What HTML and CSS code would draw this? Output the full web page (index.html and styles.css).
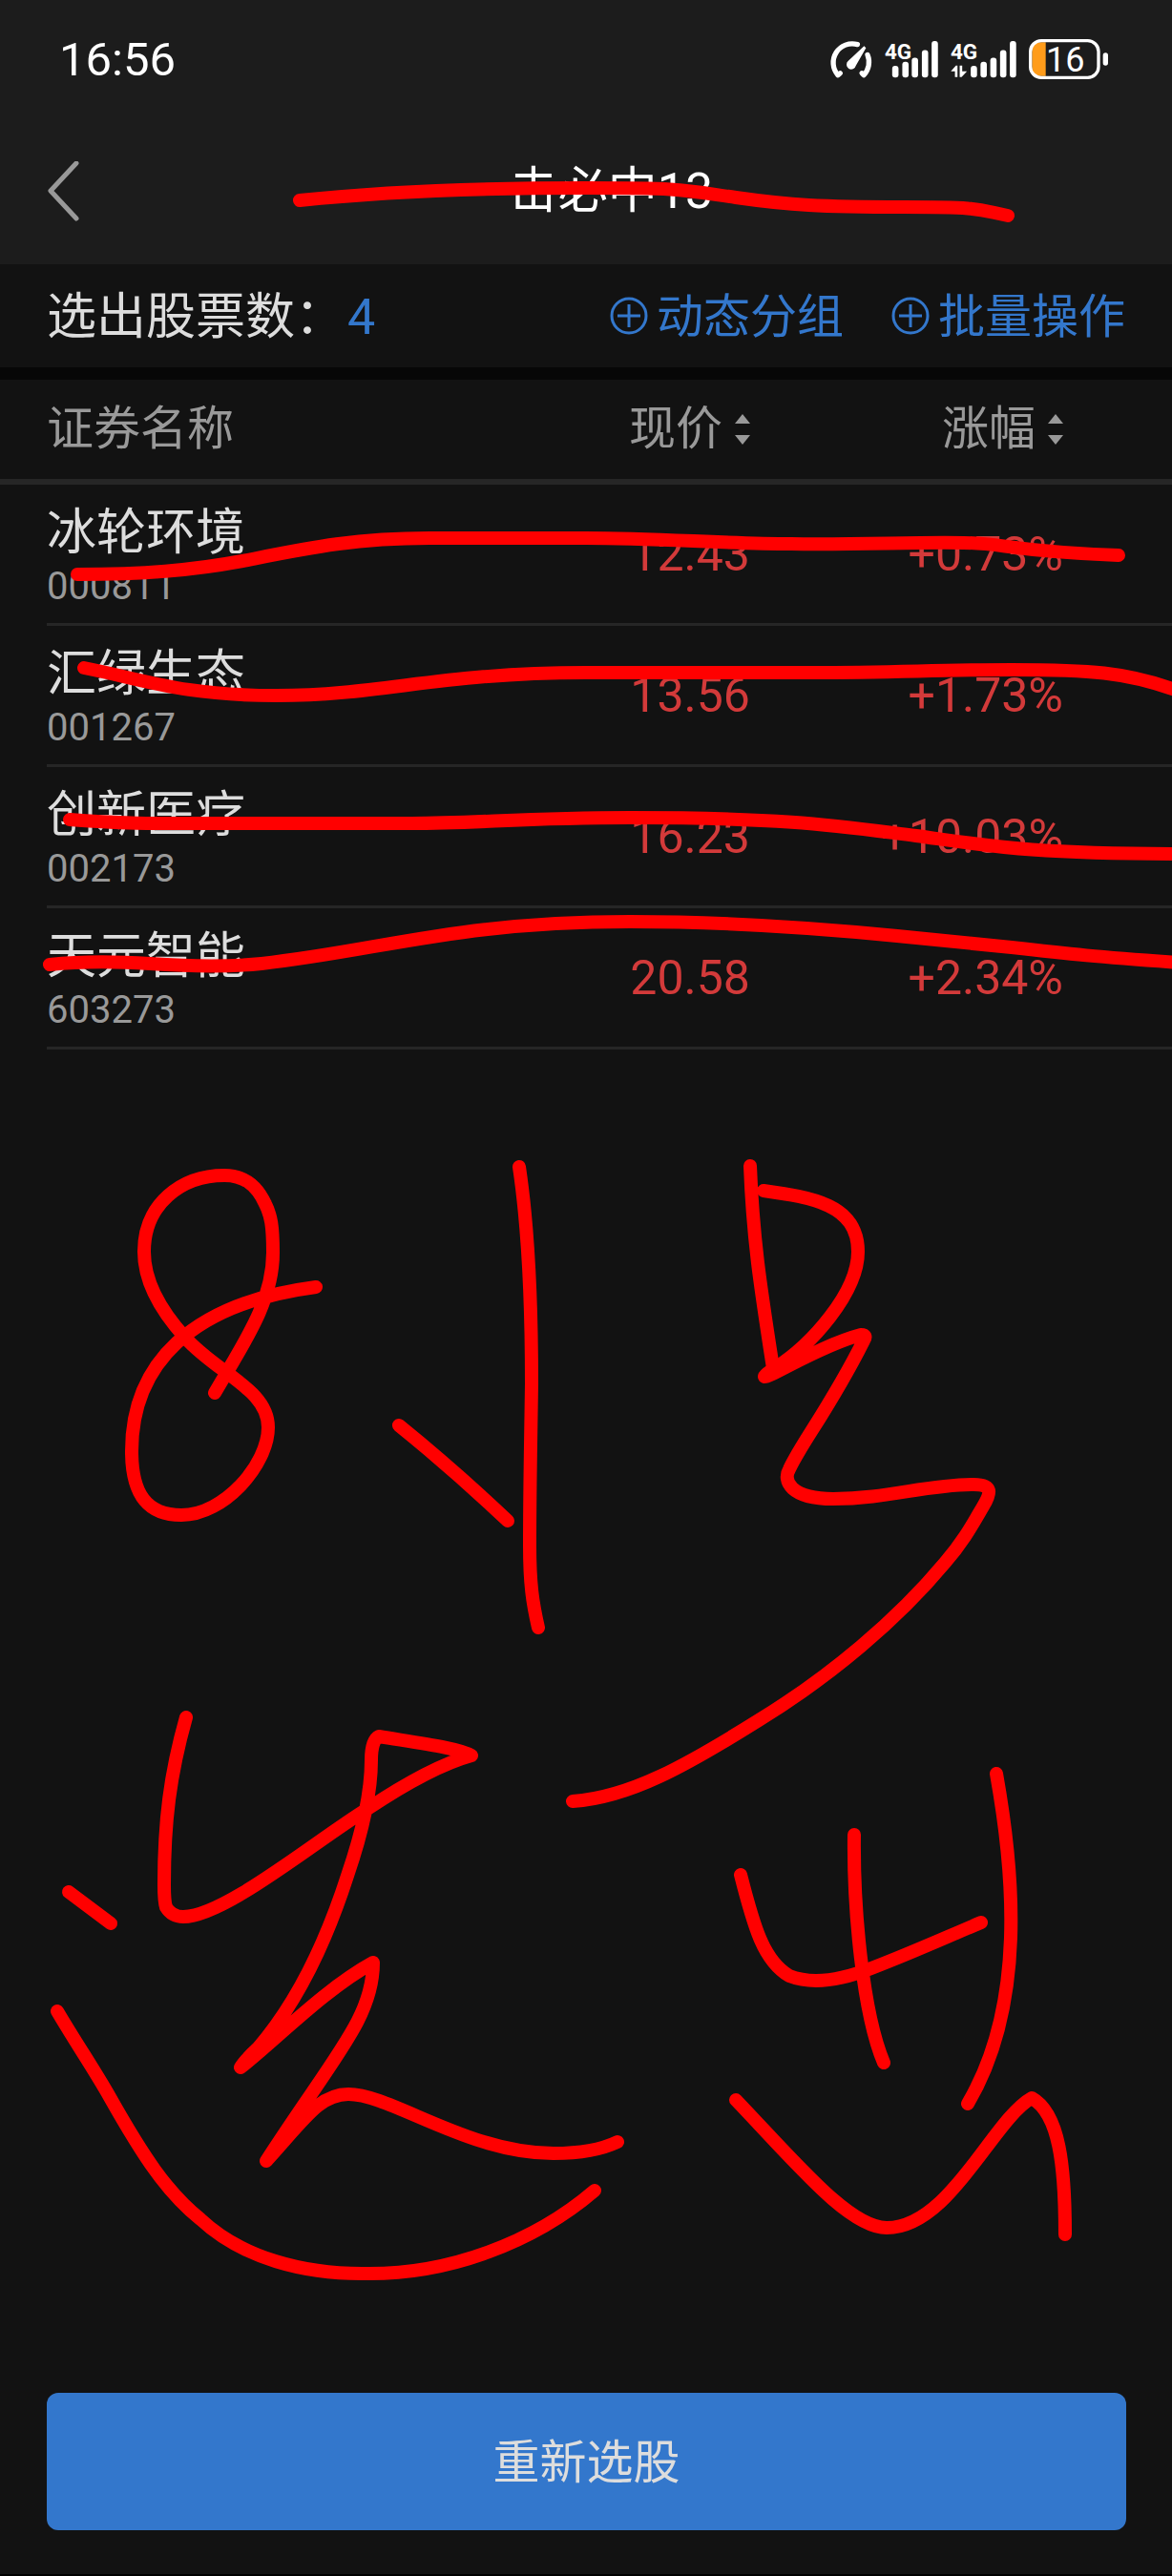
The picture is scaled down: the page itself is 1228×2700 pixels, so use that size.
FILE: index.html
```html
<!DOCTYPE html>
<html lang="zh-CN">
<head>
  <meta charset="UTF-8">
  <meta name="viewport" content="width=device-width, initial-scale=1.0">
  <title>一击必中13</title>
  <link rel="stylesheet" href="styles.css">
</head>
<body>
  <div class="page">
    <header class="top">
      <div class="status-bar">
        <span class="clock">16:56</span>
        <div class="status-icons">
          <svg width="45" height="39" viewBox="0 0 136 118" fill="none" stroke="#fff" stroke-width="16" stroke-linecap="round" stroke-linejoin="round">
            <path d="M34 102 L27 108 A60 60 0 0 1 89 11"/>
            <path d="M121 44 A60 60 0 0 1 109 108 L103 102"/>
            <path d="M110 16 L116 22 L84 78 A15 15 0 1 1 60 63 Z" fill="#fff" stroke="none"/>
          </svg>
          <svg width="56" height="39" viewBox="0 0 168 118" fill="#fff">
            <text class="net" x="-1" y="56">4G</text>
            <rect x="23" y="79" width="20" height="37" rx="9"/>
            <rect x="55" y="66" width="20" height="50" rx="9"/>
            <rect x="85" y="53" width="20" height="63" rx="9"/>
            <rect x="117" y="29" width="20" height="87" rx="9"/>
            <rect x="148" y="0" width="20" height="116" rx="9"/>
          </svg>
          <svg width="69" height="39" viewBox="0 0 207 118" fill="#fff">
            <text class="net" x="-1" y="56">4G</text>
            <path d="M0 96 L16 78 L21 78 L21 114 L13 114 L13 96 Z M28 78 L36 78 L36 96 L51 96 L34 114 L28 114 Z"/>
            <rect x="63" y="79" width="20" height="37" rx="9"/>
            <rect x="94" y="66" width="20" height="50" rx="9"/>
            <rect x="125" y="53" width="20" height="63" rx="9"/>
            <rect x="156" y="29" width="20" height="87" rx="9"/>
            <rect x="187" y="0" width="20" height="116" rx="9"/>
          </svg>
          <svg width="84" height="42" viewBox="0 0 252 126">
            <path d="M53 10 H37 Q10 10 10 37 V89 Q10 116 37 116 H53 Z" fill="#ff9c1a"/>
            <rect x="5" y="5" width="214" height="116" rx="34" fill="none" stroke="#fff" stroke-width="10"/>
            <rect x="233" y="43" width="16" height="40" rx="8" fill="#fff"/>
            <text class="level" x="115" y="102" text-anchor="middle" fill="#fff">16</text>
          </svg>
        </div>
      </div>
      <nav class="nav">
        <button class="back" type="button" aria-label="返回">
          <svg width="34" height="64" viewBox="0 0 34 64" fill="none" stroke="#999" stroke-width="5" stroke-linecap="round" stroke-linejoin="round">
            <path d="M31 2 L4 31 L31 60"/>
          </svg>
        </button>
        <h1 class="title">一击必中13</h1>
      </nav>
    </header>

    <section class="summary">
      <p class="count">选出股票数：<span class="num">4</span></p>
      <div class="actions">
        <button type="button">
          <svg width="40" height="40" viewBox="0 0 40 40" fill="none" stroke="currentColor" stroke-width="3">
            <circle cx="20" cy="20" r="18"/>
            <path d="M8 20 H32 M20 8 V32"/>
          </svg>
          <span class="label">动态分组</span>
        </button>
        <button type="button">
          <svg width="40" height="40" viewBox="0 0 40 40" fill="none" stroke="currentColor" stroke-width="3">
            <circle cx="20" cy="20" r="18"/>
            <path d="M8 20 H32 M20 8 V32"/>
          </svg>
          <span class="label">批量操作</span>
        </button>
      </div>
    </section>

    <table class="stocks">
      <thead>
        <tr>
          <th class="col-name">证券名称</th>
          <th class="col-price">
            <button type="button">现价
              <svg width="16" height="32" viewBox="0 0 16 32" fill="currentColor"><path d="M8 0 L16 10 H0 Z M0 22 H16 L8 32 Z"/></svg>
            </button>
          </th>
          <th class="col-rate">
            <button type="button">涨幅
              <svg width="16" height="32" viewBox="0 0 16 32" fill="currentColor"><path d="M8 0 L16 10 H0 Z M0 22 H16 L8 32 Z"/></svg>
            </button>
          </th>
        </tr>
      </thead>
      <tbody>
        <tr>
          <td class="col-name"><div class="name">冰轮环境</div><div class="code">000811</div></td>
          <td class="col-price">12.43</td>
          <td class="col-rate">+0.73%</td>
        </tr>
        <tr>
          <td class="col-name"><div class="name">汇绿生态</div><div class="code">001267</div></td>
          <td class="col-price">13.56</td>
          <td class="col-rate">+1.73%</td>
        </tr>
        <tr>
          <td class="col-name"><div class="name">创新医疗</div><div class="code">002173</div></td>
          <td class="col-price">16.23</td>
          <td class="col-rate">+10.03%</td>
        </tr>
        <tr>
          <td class="col-name"><div class="name">天元智能</div><div class="code">603273</div></td>
          <td class="col-price">20.58</td>
          <td class="col-rate">+2.34%</td>
        </tr>
      </tbody>
    </table>

    <footer class="bottom">
      <button class="reselect" type="button">重新选股</button>
    </footer>

    <!-- Pen marks over the page -->
    <svg class="marks" viewBox="0 0 1228 2700" aria-hidden="true">
      <!-- strike-through lines -->
      <path d="M314 210 C410 200 510 197 614 197 S715 199 771 207 S860 217 947 217 S1025 220 1056 226"/>
      <path d="M81 602 C150 602 200 598 254 588 C320 575 370 564 450 564 L614 564 C690 564 760 570 829 570 C900 571 960 568 1010 569 C1050 569 1060 578 1172 582"/>
      <path d="M88 700 C150 712 190 729 290 729 C400 729 460 705 614 705 L850 705 C940 705 980 702 1060 702 C1140 702 1180 704 1234 724"/>
      <path d="M73 859 C130 864 180 863 235 863 L431 863 C500 863 550 857 660 857 C830 857 880 866 960 876 C1040 887 1080 895 1236 895"/>
      <path d="M52 1011 C80 1008 110 1007 157 1010 C200 1013 235 1014 274 1010 C400 996 480 966 660 966 C760 966 860 973 940 981 L1060 993 C1120 1000 1150 1003 1236 1009"/>
      <!-- first line of handwriting -->
      <path d="M225 1460 C255 1408 286 1365 286 1313 C286 1285 284 1274 278 1262 C268 1240 254 1232 235 1232 C190 1232 151 1262 151 1312 C151 1340 165 1370 194 1402 C228 1440 281 1456 281 1496 C281 1535 235 1588 190 1588 C153 1588 138 1565 138 1521 C138 1430 200 1366 331 1349"/>
      <path d="M544 1223 C554 1290 557 1370 557 1450 C556 1520 555 1560 555 1620 C555 1660 558 1680 564 1706"/>
      <path d="M418 1494 C460 1528 495 1559 532 1594"/>
      <path d="M786 1222 C789 1300 797 1350 810 1434"/>
      <path d="M800 1248 C850 1255 899 1262 899 1312 C899 1355 850 1410 812 1434 Q801 1441 801 1443 C807 1444 860 1410 902 1399 Q909 1399 905 1405 C870 1475 838 1515 827 1540 C820 1552 828 1571 873 1571 C930 1571 970 1556 1020 1556 C1040 1556 1039 1564 1030 1579 C1020 1596 1010 1615 990 1638 C940 1698 870 1757 795 1803 C720 1850 660 1884 600 1888"/>
      <!-- second line of handwriting -->
      <path d="M195 1800 C178 1860 172 1910 172 1975 Q172 1993 174 1999 Q180 2009 192 2009 C235 2009 330 1930 385 1896 C430 1866 465 1848 494 1840 C480 1832 440 1827 397 1820 Q389 1824 389 1845 C389 1880 378 1925 364 1966 C345 2025 315 2095 270 2147 Q256 2160 252 2167 C290 2137 340 2085 391 2057 C391 2115 350 2155 279 2265 C320 2220 335 2195 365 2195 C410 2195 490 2257 580 2257 Q622 2257 647 2245"/>
      <path d="M72 1983 L116 2016"/>
      <path d="M60 2108 C80 2142 98 2168 115 2198 C150 2260 175 2298 210 2326 C255 2368 320 2383 379 2383 C470 2385 560 2350 623 2296"/>
      <path d="M776 1965 C790 2020 800 2055 827 2071 C850 2080 880 2076 913 2063 C955 2047 990 2031 1028 2015"/>
      <path d="M895 1923 C894 2000 904 2110 926 2162"/>
      <path d="M1044 1859 C1062 1960 1076 2100 1014 2205"/>
      <path d="M771 2201 C835 2268 890 2335 929 2335 C995 2335 1040 2222 1081 2199 C1110 2215 1116 2270 1116 2342"/>
    </svg>
  </div>
</body>
</html>
```
FILE: styles.css
```css
* {
  margin: 0;
  padding: 0;
  box-sizing: border-box;
}

body {
  font-family: Roboto, "Noto Sans CJK SC", sans-serif;
  background-color: #121212;
  color: #ddd;
}

button {
  font: inherit;
  color: inherit;
  background: none;
  border: none;
  cursor: pointer;
}

.page {
  position: relative;
  display: flex;
  flex-direction: column;
  min-height: 100vh;
  overflow: hidden;
  border-bottom: 2px solid #000;
}

/* Status bar and title */
.top {
  background-color: #1c1c1c;
  color: #fff;
}

.status-bar {
  display: flex;
  justify-content: space-between;
  align-items: center;
  height: 124px;
  padding: 0 66px 0 62px;
}

.clock {
  font-size: 49px;
}

.status-icons {
  display: flex;
  align-items: center;
  gap: 13px;
}

.status-icons svg {
  overflow: visible;
}

.net {
  font-size: 68px;
  font-weight: 700;
}

.level {
  font-size: 108px;
}

.nav {
  display: grid;
  grid-template-columns: 1fr auto 1fr;
  align-items: center;
  height: 153px;
  padding: 0 49px;
}

.back {
  justify-self: start;
}

.back svg {
  display: block;
}

.title {
  font-size: 52px;
  font-weight: 400;
  line-height: 76px;
}

/* Result count and actions */
.summary {
  display: flex;
  justify-content: space-between;
  align-items: center;
  height: 121px;
  padding: 0 49px;
  border-bottom: 13px solid #070707;
}

.count {
  padding-bottom: 8px;
  font-size: 52px;
}

.count .num {
  margin-left: 3px;
  color: #37c;
}

.actions {
  display: flex;
  gap: 50px;
}

.actions button {
  display: flex;
  align-items: center;
  gap: 9px;
  font-size: 49px;
  color: #37c;
}

.actions .label {
  padding-bottom: 8px;
}

/* Stock table */
.stocks {
  width: 100%;
  table-layout: fixed;
  border-collapse: separate;
  border-spacing: 0;
}

.stocks th {
  height: 110px;
  border-bottom: 6px solid #262626;
  font-size: 49px;
  font-weight: 400;
  line-height: 72px;
  color: #999;
}

.stocks th button {
  display: inline-flex;
  align-items: center;
  gap: 13px;
}

.stocks tbody tr {
  background: linear-gradient(#262626, #262626) no-repeat 49px bottom / 100% 3px;
}

.stocks td {
  height: 148px;
  padding-bottom: 2px;
  font-size: 50px;
  color: #d33a3a;
}

.stocks .col-name {
  width: 34%;
  padding-left: 49px;
  text-align: left;
}

.stocks .col-price {
  width: 30%;
  text-align: right;
}

.stocks .col-rate {
  width: 36%;
  padding-right: 114px;
  text-align: right;
}

.name {
  padding-top: 4px;
  font-size: 52px;
  line-height: 64px;
  color: #ddd;
}

.code {
  font-size: 40px;
  line-height: 48px;
  color: #999;
}

/* Bottom button */
.bottom {
  margin-top: auto;
  padding: 0 48px 46px 49px;
}

.reselect {
  width: 100%;
  height: 144px;
  padding-bottom: 8px;
  border-radius: 12px;
  background-color: #37c;
  color: #ddd;
  font-size: 49px;
}

.marks {
  position: absolute;
  top: 0;
  left: 0;
  width: 100%;
  pointer-events: none;
  fill: none;
  stroke: #f00;
  stroke-width: 14;
  stroke-linecap: round;
  stroke-linejoin: round;
}
```
